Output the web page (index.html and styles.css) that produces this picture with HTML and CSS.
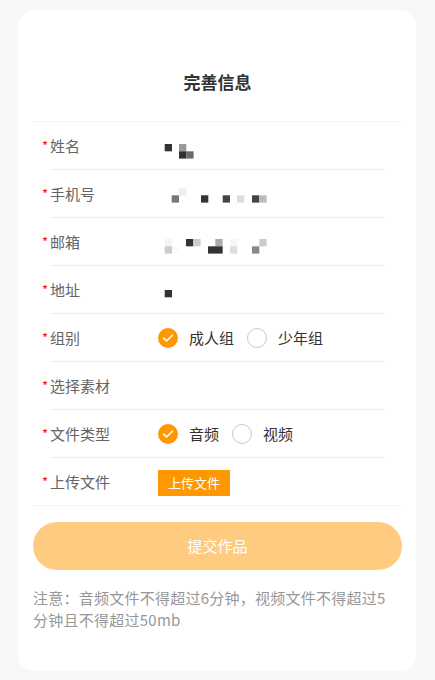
FILE: index.html
```html
<html lang="zh-CN">
	<head>
		<meta charset="utf-8" />
		<title>完善信息</title>
		<link rel="stylesheet" href="styles.css">
	</head>
	<body>
		<div class="card">
			<div class="card-title">完善信息</div>

			<div class="form">
				<div class="row">
					<div class="label">姓名</div>
					<svg class="mosaic" width="110" height="47" viewBox="0 0 110 47">
						<rect x="6.7" y="22" width="7.3" height="7.3" fill="#333333"/>
						<rect x="21" y="22" width="7.3" height="7.3" fill="#999999"/>
						<rect x="21" y="29.3" width="7.3" height="7.3" fill="#2f2f2f"/>
						<rect x="28.3" y="29.3" width="7.3" height="7.3" fill="#6b6b6b"/>
					</svg>
				</div>
				<div class="row">
					<div class="label">手机号</div>
					<svg class="mosaic" width="110" height="47" viewBox="0 0 110 47">
						<rect x="21" y="18.3" width="7.3" height="7.3" fill="#eeeeee"/>
						<rect x="13.7" y="25.3" width="7.3" height="7.3" fill="#777777"/>
						<rect x="43" y="25.3" width="7.3" height="7.3" fill="#333333"/>
						<rect x="64.7" y="25.3" width="7.3" height="7.3" fill="#444444"/>
						<rect x="79" y="25.3" width="7.3" height="7.3" fill="#dddddd"/>
						<rect x="94" y="25.3" width="7.3" height="7.3" fill="#444444"/>
						<rect x="101.3" y="25.3" width="7.3" height="7.3" fill="#bbbbbb"/>
					</svg>
				</div>
				<div class="row">
					<div class="label">邮箱</div>
					<svg class="mosaic" width="110" height="47" viewBox="0 0 110 47">
						<rect x="6.7" y="21" width="7.3" height="7.3" fill="#f4f4f4"/>
						<rect x="28" y="21" width="7.3" height="7.3" fill="#333333"/>
						<rect x="35.3" y="21" width="7.3" height="7.3" fill="#cccccc"/>
						<rect x="57.3" y="21" width="7.3" height="7.3" fill="#aaaaaa"/>
						<rect x="72" y="21" width="7.3" height="7.3" fill="#f5f5f5"/>
						<rect x="101.3" y="21" width="7.3" height="7.3" fill="#cccccc"/>
						<rect x="6.7" y="28.3" width="7.3" height="7.3" fill="#cccccc"/>
						<rect x="14" y="28.3" width="7.3" height="7.3" fill="#fafafa"/>
						<rect x="50" y="28.3" width="14.7" height="7.3" fill="#333333"/>
						<rect x="72" y="28.3" width="7.3" height="7.3" fill="#dddddd"/>
						<rect x="94" y="28.3" width="7.3" height="7.3" fill="#888888"/>
					</svg>
				</div>
				<div class="row">
					<div class="label">地址</div>
					<svg class="mosaic" width="110" height="47" viewBox="0 0 110 47">
						<rect x="6.7" y="24" width="7.3" height="7.3" fill="#333333"/>
					</svg>
				</div>
				<div class="row">
					<div class="label">组别</div>
					<div class="radio-group">
						<div class="radio">
							<svg class="radio-icon" width="20" height="20" viewBox="0 0 20 20">
								<circle cx="10" cy="10" r="10" fill="#ff9800"/>
								<path d="M5.6 10.2 L8.6 13 L14.4 7.2" fill="none" stroke="#ffffff" stroke-width="1.6" stroke-linecap="round" stroke-linejoin="round"/>
							</svg>
							<span class="radio-label">成人组</span>
						</div>
						<div class="radio">
							<svg class="radio-icon" width="20" height="20" viewBox="0 0 20 20">
								<circle cx="10" cy="10" r="9.5" fill="#ffffff" stroke="#c8c9cc" stroke-width="1"/>
							</svg>
							<span class="radio-label">少年组</span>
						</div>
					</div>
				</div>
				<div class="row">
					<div class="label">选择素材</div>
				</div>
				<div class="row">
					<div class="label">文件类型</div>
					<div class="radio-group">
						<div class="radio">
							<svg class="radio-icon" width="20" height="20" viewBox="0 0 20 20">
								<circle cx="10" cy="10" r="10" fill="#ff9800"/>
								<path d="M5.6 10.2 L8.6 13 L14.4 7.2" fill="none" stroke="#ffffff" stroke-width="1.6" stroke-linecap="round" stroke-linejoin="round"/>
							</svg>
							<span class="radio-label">音频</span>
						</div>
						<div class="radio">
							<svg class="radio-icon" width="20" height="20" viewBox="0 0 20 20">
								<circle cx="10" cy="10" r="9.5" fill="#ffffff" stroke="#c8c9cc" stroke-width="1"/>
							</svg>
							<span class="radio-label">视频</span>
						</div>
					</div>
				</div>
				<div class="row">
					<div class="label">上传文件</div>
					<div class="upload-btn">上传文件</div>
				</div>
			</div>

			<div class="submit-btn">提交作品</div>

			<p class="note">注意：音频文件不得超过6分钟，视频文件不得超过5分钟且不得超过50mb</p>
		</div>
	</body>
</html>
```

FILE: styles.css
```css
body
{
	background: #f7f8fa;
	margin: 0;
	padding: 10px 19px 9px 18px;
	font-family: "Noto Sans CJK SC", "Noto Sans", sans-serif;
	color: #323233;
}

.card
{
	background: #ffffff;
	border-radius: 16px;
	padding: 0 14px 40px 15px;
}

.card-title
{
	padding: 60px 0 27px 0;
	line-height: 24px;
	font-size: 17px;
	font-weight: 700;
	text-align: center;
	color: #323233;
}

.form
{
	border-top: 1px solid #f2f3f5;
	border-bottom: 1px solid #f2f3f5;
}

.row
{
	display: flex;
	align-items: center;
	height: 47px;
	margin: 0 17px;
	border-bottom: 1px solid #ebedf0;
}

.row:last-child
{
	border-bottom: none;
}

.label
{
	position: relative;
	width: 108px;
	flex-shrink: 0;
	font-size: 15px;
	line-height: 24px;
	color: #646566;
}

.label::before
{
	content: "*";
	position: absolute;
	left: -8px;
	top: 0;
	font-size: 13px;
	color: #ee0a24;
}

.mosaic
{
	display: block;
	align-self: stretch;
}

.radio-group
{
	display: flex;
	align-items: center;
}

.radio
{
	display: flex;
	align-items: center;
	margin-right: 13px;
}

.radio-icon
{
	display: block;
}

.radio-label
{
	margin-left: 11px;
	font-size: 15px;
	line-height: 24px;
	color: #323233;
}

.upload-btn
{
	width: 72px;
	height: 26px;
	line-height: 26px;
	background: #ff9800;
	color: #ffffff;
	font-size: 13px;
	text-align: center;
	margin-top: 2px;
}

.submit-btn
{
	margin-top: 16px;
	height: 48px;
	line-height: 48px;
	border-radius: 24px;
	background: #ffcb80;
	color: #ffffff;
	font-size: 15px;
	text-align: center;
}

.note
{
	margin: 17px 10px 0 0;
	font-size: 15px;
	line-height: 22px;
	letter-spacing: 0.25px;
	color: #969799;
}
```
